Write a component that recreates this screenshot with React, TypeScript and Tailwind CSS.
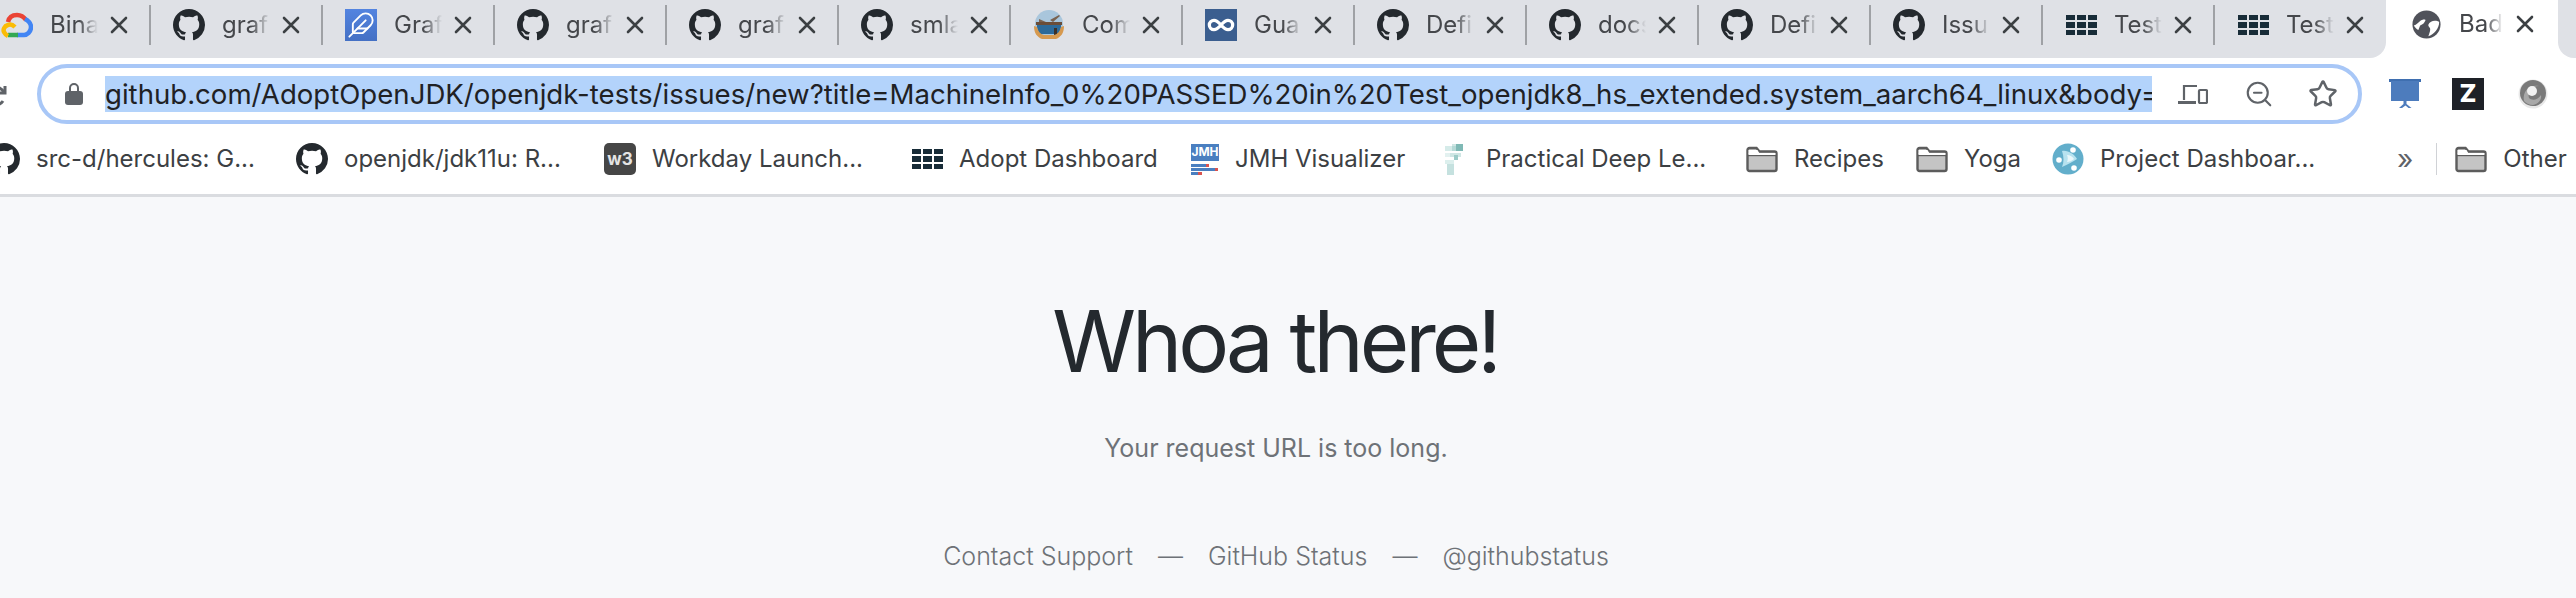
import { Feather, Infinity as InfinityIcon, Star, ZoomOut } from "lucide-react"
import type { ReactNode } from "react"

const GH_PATH =
  "M8 0C3.58 0 0 3.58 0 8c0 3.54 2.29 6.53 5.47 7.59.4.07.55-.17.55-.38 0-.19-.01-.82-.01-1.49-2.01.37-2.53-.49-2.69-.94-.09-.23-.48-.94-.82-1.13-.28-.15-.68-.52-.01-.53.63-.01 1.08.58 1.23.82.72 1.21 1.87.87 2.33.66.07-.52.28-.87.51-1.07-1.78-.2-3.64-.89-3.64-3.95 0-.87.31-1.59.82-2.15-.08-.2-.36-1.02.08-2.12 0 0 .67-.21 2.2.82.64-.18 1.32-.27 2-.27.68 0 1.36.09 2 .27 1.53-1.04 2.2-.82 2.2-.82.44 1.1.16 1.92.08 2.12.51.56.82 1.27.82 2.15 0 3.07-1.87 3.75-3.65 3.95.29.25.54.73.54 1.48 0 1.07-.01 1.93-.01 2.2 0 .21.15.46.55.38A8.013 8.013 0 0016 8c0-4.42-3.58-8-8-8z"

function GitHubIcon() {
  return (
    <svg viewBox="0 0 16 16" className="size-8 shrink-0" fill="#24292e">
      <path fillRule="evenodd" d={GH_PATH} />
    </svg>
  )
}

function GoogleCloudIcon() {
  return (
    <svg viewBox="0 0 32 32" className="size-8 shrink-0" fill="none" strokeWidth="4.5">
      <path d="M7 13C8 8 12 6 16 6c4 0 7 2 9 5" stroke="#ea4335" />
      <path d="M24 10c4 2 6 5 6 8 0 5-4 8-7 8h-7" stroke="#4285f4" />
      <path d="M7 26h10" stroke="#34a853" />
      <path d="M14 18c-2-2-5-3-7-2-4 1-5 5-4 7 1 2 2 3 4 4" stroke="#fbbc05" />
    </svg>
  )
}

function FeatherIcon() {
  return (
    <span className="flex size-8 shrink-0 items-center justify-center bg-gradient-to-b from-[#5384e0] to-[#4470c4]">
      <Feather className="size-7 text-white" strokeWidth={1.6} />
    </span>
  )
}

function InfinitySquare() {
  return (
    <span className="flex size-8 shrink-0 items-center justify-center bg-[#3b5e8f]">
      <InfinityIcon className="size-7 text-white" strokeWidth={2.8} />
    </span>
  )
}

function LakeIcon() {
  return (
    <svg viewBox="0 0 32 32" className="size-8 shrink-0">
      <circle cx="16" cy="15" r="14" fill="#a9c6dc" />
      <path d="M3 13h26v3H3z" fill="#6b4d38" />
      <path d="M4 16h24a12 12 0 0 1-3 9H7a12 12 0 0 1-3-9z" fill="#2d6a99" />
      <path d="M6 10l7 3H6zM17 11l9-5 1 1-7 6z" fill="#7a6250" />
      <path d="M21 19h3v8h-3z" fill="#3b3029" />
      <path d="M1 17c0 7 3 11 8 13h14c5-2 8-6 8-13l-3 1c-1 4-3 7-7 8H11c-4-1-6-4-7-8z" fill="#d6994f" />
    </svg>
  )
}

function GridIcon() {
  return (
    <span className="grid h-[20px] w-[32px] shrink-0 grid-cols-3 grid-rows-3 gap-[2px] pl-[1px]">
      {Array.from({ length: 9 }).map((_, i) => (
        <span key={i} className="bg-[#182c38]" />
      ))}
    </span>
  )
}

function GlobeIcon() {
  return (
    <svg viewBox="0 0 32 32" className="size-[29px] shrink-0">
      <circle cx="16" cy="16" r="15.5" fill="#50525a" />
      <path d="M2 17c3-1 5-3 7-5 2-1 4-2 6-1-1 3-3 5-6 6l-2 5c-2-1-4-3-5-5z" fill="#fff" />
      <path d="M30 13c-2-1-6-2-9 0-3 2-4 4-2 6 2 1 1 5-1 10 6-2 12-8 12-16z" fill="#fff" />
    </svg>
  )
}

function W3Icon() {
  return (
    <span className="flex size-8 shrink-0 items-center justify-center rounded-[5px] bg-[#464646] text-[17px] leading-none font-bold text-[#e4e4e4]">
      w3
    </span>
  )
}

function JmhIcon() {
  return (
    <span className="flex w-[28px] shrink-0 flex-col">
      <span className="flex h-[17px] items-center justify-center bg-[#4a7fc0] text-[12px] leading-none font-bold text-white">
        JMH
      </span>
      <span className="mt-[3px] flex h-[3px] w-[18px] bg-[#4a7fc0]">
        <span className="ml-auto w-[3px] bg-[#d9534f]" />
      </span>
      <span className="mt-[1px] flex h-[3px] w-[27px] bg-[#4a7fc0]">
        <span className="ml-auto w-[3px] bg-[#d9534f]" />
      </span>
      <span className="mt-[1px] flex h-[3px] w-[11px] bg-[#4a7fc0]">
        <span className="ml-auto w-[4px] bg-[#d9534f]" />
      </span>
    </span>
  )
}

function PixelIcon() {
  return (
    <svg viewBox="0 0 8 14" className="mr-[4px] h-[31px] w-[24px] shrink-0" shapeRendering="crispEdges">
      <path d="M3 0h2v1H3z" fill="#cfe6e4" />
      <path d="M5 0h3v3H5z" fill="#7fb9b5" />
      <path d="M0 1h3v2H0z" fill="#d5ebe9" />
      <path d="M3 1h2v2H3z" fill="#b5d9d6" />
      <path d="M0 4h2v2H0z" fill="#e3f1f0" />
      <path d="M2 4h5v2H2z" fill="#cfe6e4" />
      <path d="M4 5h2v2H4z" fill="#9ccbc8" />
      <path d="M0 7h4v2H0z" fill="#dcefed" />
      <path d="M1 9h3v5H1z" fill="#c5e1df" />
    </svg>
  )
}

function FolderIcon() {
  return (
    <svg viewBox="0 0 32 28" className="h-[28px] w-8 shrink-0" fill="#c4c4c4" stroke="#5c5c5c" strokeWidth="2.4">
      <path d="M1.500 5a2 2 0 0 1 2-2h7l3 3.500h15a2 2 0 0 1 2 2V24a2 2 0 0 1-2 2h-25a2 2 0 0 1-2-2z" />
      <path d="M1.500 10h29" fill="none" />
      <path d="M2.500 5h9l2 3.500H2.500z" fill="#fff" stroke="none" />
      <path d="M2.500 8h27v2H2.500z" fill="#fff" stroke="none" />
    </svg>
  )
}

function OrbIcon() {
  return (
    <svg viewBox="0 0 32 32" className="size-8 shrink-0">
      <circle cx="16" cy="16" r="15.500" fill="#62aecb" />
      <path d="M10 8c6-1 12 3 15 8-4 3-9 5-15 8 2-5 2-10 0-16z" fill="#b7e2ef" />
      <path d="M15 12c3 0 6 2 7 4-2 2-5 3-7 3 1-2 1-5 0-7z" fill="#e9f7fb" />
      <circle cx="21" cy="7" r="2.800" fill="#fff" />
      <circle cx="7" cy="17" r="2.800" fill="#fff" />
      <circle cx="22" cy="25" r="2.800" fill="#fff" />
    </svg>
  )
}

const tabs: { title: string; icon: ReactNode }[] = [
  { title: "Bina", icon: <GoogleCloudIcon /> },
  { title: "graf", icon: <GitHubIcon /> },
  { title: "Graf", icon: <FeatherIcon /> },
  { title: "graf", icon: <GitHubIcon /> },
  { title: "graf", icon: <GitHubIcon /> },
  { title: "smla", icon: <GitHubIcon /> },
  { title: "Com", icon: <LakeIcon /> },
  { title: "Gua", icon: <InfinitySquare /> },
  { title: "Defi", icon: <GitHubIcon /> },
  { title: "docs", icon: <GitHubIcon /> },
  { title: "Defi", icon: <GitHubIcon /> },
  { title: "Issu", icon: <GitHubIcon /> },
  { title: "Test", icon: <GridIcon /> },
  { title: "Test", icon: <GridIcon /> },
]

const bookmarks: { label: string; icon: ReactNode; width: string; margin: string }[] = [
  { label: "openjdk/jdk11u: R...", icon: <GitHubIcon />, width: "w-[216px]", margin: "ml-[44px]" },
  { label: "Workday Launch...", icon: <W3Icon />, width: "w-[205px]", margin: "ml-[44px]" },
  { label: "Adopt Dashboard", icon: <GridIcon />, width: "w-[197px]", margin: "ml-[54px]" },
  { label: "JMH Visualizer", icon: <JmhIcon />, width: "w-[167px]", margin: "ml-[35px]" },
  { label: "Practical Deep Le...", icon: <PixelIcon />, width: "w-[215px]", margin: "ml-[40px]" },
  { label: "Recipes", icon: <FolderIcon />, width: "w-[89px]", margin: "ml-[45px]" },
  { label: "Yoga", icon: <FolderIcon />, width: "w-[55px]", margin: "ml-[33px]" },
  { label: "Project Dashboar...", icon: <OrbIcon />, width: "w-[213px]", margin: "ml-[33px]" },
]

function CloseGlyph() {
  return (
    <svg viewBox="0 0 18 18" className="size-[18px] shrink-0" stroke="#3c4043" strokeWidth="2.6" strokeLinecap="round">
      <path d="M2 2l14 14M16 2L2 16" />
    </svg>
  )
}

function Tab({ title, icon, separator }: { title: string; icon: ReactNode; separator: boolean }) {
  return (
    <div className="flex h-[58px] w-[172px] shrink-0 pb-[13px] pt-[5px]">
      <div className="flex w-[170px] items-center pl-[22px]">
        {icon}
        <span className="ml-[17px] w-[48px] overflow-hidden text-[24px] whitespace-nowrap text-[#45474b] [mask-image:linear-gradient(to_right,black_60%,transparent)]">
          {title}
        </span>
        <span className="ml-[12px]">
          <CloseGlyph />
        </span>
      </div>
      {separator && <div className="h-[40px] w-[2px] bg-[#9fa1a5]" />}
    </div>
  )
}

function DevicesIcon() {
  return (
    <svg viewBox="0 0 30 20" className="h-[20px] w-[30px]" fill="none" stroke="#5f6368" strokeWidth="2.2">
      <path d="M19 2H6v14" />
      <path d="M0 18.500h18" strokeWidth="3" />
      <rect x="21" y="6" width="8" height="13" rx="1" />
    </svg>
  )
}

export default function App() {
  return (
    <div className="flex h-[598px] w-[2576px] flex-col overflow-hidden bg-white font-['Inter',sans-serif]">
      <div className="flex h-[58px] shrink-0">
        <div className="flex w-[2386px] shrink-0 overflow-hidden rounded-br-[16px] bg-[#dfe1e6]">
          <div className="-ml-[21px] flex">
            {tabs.map((tab, i) => (
              <Tab key={i} title={tab.title} icon={tab.icon} separator={i < tabs.length - 1} />
            ))}
          </div>
        </div>
        <div className="flex w-[172px] shrink-0 items-center pb-[10px] pl-[26px]">
          <GlobeIcon />
          <span className="ml-[18px] w-[44px] overflow-hidden text-[24px] whitespace-nowrap text-[#45474b] [mask-image:linear-gradient(to_right,black_60%,transparent)]">
            Bad
          </span>
          <span className="ml-[13px]">
            <CloseGlyph />
          </span>
        </div>
        <div className="flex-1 rounded-bl-[16px] bg-[#dfe1e6]" />
      </div>

      <div className="flex h-[66px] shrink-0 items-center pt-[6px]">
        <svg viewBox="0 0 24 24" className="-ml-[16px] size-[24px] shrink-0" fill="none" stroke="#5f6368" strokeWidth="3">
          <path d="M21 4v7h-7" />
          <path d="M20 11a9 9 0 1 0-1 8" />
        </svg>
        <div className="ml-[29px] flex h-[60px] w-[2325px] shrink-0 items-center rounded-[30px] border-4 border-[#a8c7f7] bg-white pl-[24px]">
          <svg viewBox="0 0 18 22" className="h-[22px] w-[18px] shrink-0" fill="#5f6368">
            <path d="M3 8h12a3 3 0 0 1 3 3v8a3 3 0 0 1-3 3H3a3 3 0 0 1-3-3v-8a3 3 0 0 1 3-3z" />
            <path d="M5 9V5a4 4 0 0 1 8 0v4" fill="none" stroke="#5f6368" strokeWidth="2" />
          </svg>
          <div className="ml-[22px] h-[36px] w-[2047px] shrink-0 overflow-hidden bg-[#b3d3fb] text-[27.6px] leading-[36px] whitespace-nowrap text-[#202124]">
            github.com/AdoptOpenJDK/openjdk-tests/issues/new?title=MachineInfo_0%20PASSED%20in%20Test_openjdk8_hs_extended.system_aarch64_linux&amp;body=
          </div>
          <div className="ml-[26px] flex items-center">
            <DevicesIcon />
            <ZoomOut className="ml-[36px] size-[30px] text-[#5f6368]" strokeWidth={1.7} />
            <Star className="ml-[34px] size-[30px] text-[#5f6368]" strokeWidth={2} />
          </div>
        </div>
        <div className="ml-[27px] flex items-center">
          <svg viewBox="0 0 32 32" className="size-8 shrink-0">
            <path d="M0 1h32v3H0z" fill="#3f6fb0" />
            <path d="M2 3h28v20H2z" fill="#4d7cbd" />
            <path d="M14.500 23h3v3l5 4h-3l-3-2.500L13 30h-3l4.500-4z" fill="#4d7cbd" />
          </svg>
          <span className="ml-[31px] flex size-8 shrink-0 items-center justify-center bg-[#1e2127] text-[25px] font-extrabold text-white">
            Z
          </span>
          <svg viewBox="0 0 30 30" className="ml-[34px] size-[30px] shrink-0">
            <circle cx="15" cy="15" r="14.500" fill="#e8e8e8" />
            <circle cx="15" cy="14" r="13" fill="#7a7a7a" />
            <path d="M6 22C4 12 12 5 21 7c-7 0-12 6-10 12 3 3 9 2 12-3 1 5-3 9-8 10-4 0-7-2-9-4z" fill="#a8a8a8" />
            <circle cx="14" cy="12" r="5" fill="#f2f2f2" />
          </svg>
        </div>
      </div>

      <div className="flex h-[70px] shrink-0 items-center">
        <div className="flex items-center">
          <span className="-ml-[12px]">
            <GitHubIcon />
          </span>
          <span className="ml-[16px] w-[216px] text-[24px] whitespace-nowrap text-[#3c4043]">src-d/hercules: G...</span>
        </div>
        {bookmarks.map((b, i) => (
          <div key={i} className={`flex items-center ${b.margin}`}>
            {b.icon}
            <span className={`ml-[16px] text-[24px] whitespace-nowrap text-[#3c4043] ${b.width}`}>{b.label}</span>
          </div>
        ))}
        <span className="ml-[84px] text-[28px] leading-none text-[#5f6368]">»</span>
        <div className="ml-[23px] h-[32px] w-[1px] bg-[#d0d2d6]" />
        <div className="ml-[18px] flex shrink-0 items-center">
          <FolderIcon />
          <span className="ml-[16px] text-[24px] whitespace-nowrap text-[#3c4043]">Other</span>
        </div>
      </div>

      <div className="h-[3px] shrink-0 bg-[#dadce0]" />

      <main className="flex flex-1 flex-col items-center bg-[#f7f8fa] pr-[24px]">
        <h1 className="mt-[95px] pr-[2px] text-[85px] leading-[100px] font-normal tracking-[-4px] text-[#24292e]">Whoa there!</h1>
        <p className="mt-[38px] text-[25px] leading-[36px] text-[#6e7277]">Your request URL is too long.</p>
        <div className="mt-[72px] flex items-center gap-[25px] text-[25px] leading-[36px] font-light text-[#6e7277]">
          <span>Contact Support</span>
          <span>—</span>
          <span>GitHub Status</span>
          <span>—</span>
          <span>@githubstatus</span>
        </div>
      </main>
    </div>
  )
}
